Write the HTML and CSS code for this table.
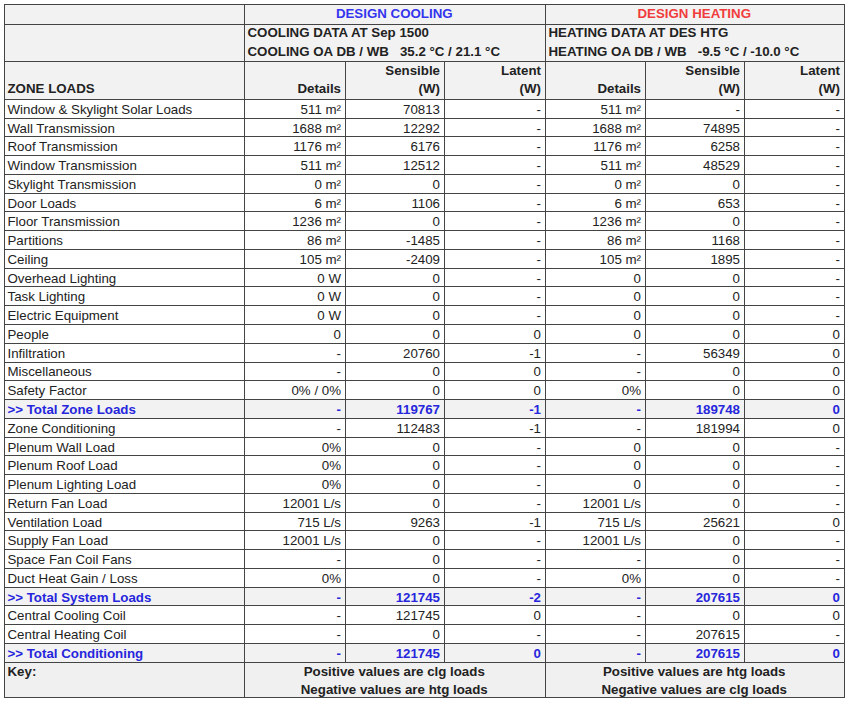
FILE: index.html
```html
<!DOCTYPE html>
<html>
<head>
<meta charset="utf-8">
<title>Zone Loads</title>
<link rel="stylesheet" href="styles.css">
</head>
<body>
<div class="sheet">
  <div class="c hd"></div>
  <div class="c hd span3 ctr title-c">DESIGN COOLING</div>
  <div class="c hd span3 ctr title-h">DESIGN HEATING</div>

  <div class="c hd"></div>
  <div class="c hd span3 info"><span>COOLING DATA AT Sep 1500</span><span>COOLING OA DB / WB   35.2 °C / 21.1 °C</span></div>
  <div class="c hd span3 info"><span>HEATING DATA AT DES HTG</span><span>HEATING OA DB / WB   -9.5 °C / -10.0 °C</span></div>

  <div class="c hd">ZONE LOADS</div>
  <div class="c hd r">Details</div>
  <div class="c hd r"><span>Sensible</span><span>(W)</span></div>
  <div class="c hd r"><span>Latent</span><span>(W)</span></div>
  <div class="c hd r">Details</div>
  <div class="c hd r"><span>Sensible</span><span>(W)</span></div>
  <div class="c hd r"><span>Latent</span><span>(W)</span></div>

  <div class="c">Window &amp; Skylight Solar Loads</div><div class="c r">511 m²</div><div class="c r">70813</div><div class="c r">-</div><div class="c r">511 m²</div><div class="c r">-</div><div class="c r">-</div>
  <div class="c">Wall Transmission</div><div class="c r">1688 m²</div><div class="c r">12292</div><div class="c r">-</div><div class="c r">1688 m²</div><div class="c r">74895</div><div class="c r">-</div>
  <div class="c">Roof Transmission</div><div class="c r">1176 m²</div><div class="c r">6176</div><div class="c r">-</div><div class="c r">1176 m²</div><div class="c r">6258</div><div class="c r">-</div>
  <div class="c">Window Transmission</div><div class="c r">511 m²</div><div class="c r">12512</div><div class="c r">-</div><div class="c r">511 m²</div><div class="c r">48529</div><div class="c r">-</div>
  <div class="c">Skylight Transmission</div><div class="c r">0 m²</div><div class="c r">0</div><div class="c r">-</div><div class="c r">0 m²</div><div class="c r">0</div><div class="c r">-</div>
  <div class="c">Door Loads</div><div class="c r">6 m²</div><div class="c r">1106</div><div class="c r">-</div><div class="c r">6 m²</div><div class="c r">653</div><div class="c r">-</div>
  <div class="c">Floor Transmission</div><div class="c r">1236 m²</div><div class="c r">0</div><div class="c r">-</div><div class="c r">1236 m²</div><div class="c r">0</div><div class="c r">-</div>
  <div class="c">Partitions</div><div class="c r">86 m²</div><div class="c r">-1485</div><div class="c r">-</div><div class="c r">86 m²</div><div class="c r">1168</div><div class="c r">-</div>
  <div class="c">Ceiling</div><div class="c r">105 m²</div><div class="c r">-2409</div><div class="c r">-</div><div class="c r">105 m²</div><div class="c r">1895</div><div class="c r">-</div>
  <div class="c">Overhead Lighting</div><div class="c r">0 W</div><div class="c r">0</div><div class="c r">-</div><div class="c r">0</div><div class="c r">0</div><div class="c r">-</div>
  <div class="c">Task Lighting</div><div class="c r">0 W</div><div class="c r">0</div><div class="c r">-</div><div class="c r">0</div><div class="c r">0</div><div class="c r">-</div>
  <div class="c">Electric Equipment</div><div class="c r">0 W</div><div class="c r">0</div><div class="c r">-</div><div class="c r">0</div><div class="c r">0</div><div class="c r">-</div>
  <div class="c">People</div><div class="c r">0</div><div class="c r">0</div><div class="c r">0</div><div class="c r">0</div><div class="c r">0</div><div class="c r">0</div>
  <div class="c">Infiltration</div><div class="c r">-</div><div class="c r">20760</div><div class="c r">-1</div><div class="c r">-</div><div class="c r">56349</div><div class="c r">0</div>
  <div class="c">Miscellaneous</div><div class="c r">-</div><div class="c r">0</div><div class="c r">0</div><div class="c r">-</div><div class="c r">0</div><div class="c r">0</div>
  <div class="c">Safety Factor</div><div class="c r">0% / 0%</div><div class="c r">0</div><div class="c r">0</div><div class="c r">0%</div><div class="c r">0</div><div class="c r">0</div>
  <div class="c tot">&gt;&gt; Total Zone Loads</div><div class="c r tot">-</div><div class="c r tot">119767</div><div class="c r tot">-1</div><div class="c r tot">-</div><div class="c r tot">189748</div><div class="c r tot">0</div>
  <div class="c">Zone Conditioning</div><div class="c r">-</div><div class="c r">112483</div><div class="c r">-1</div><div class="c r">-</div><div class="c r">181994</div><div class="c r">0</div>
  <div class="c">Plenum Wall Load</div><div class="c r">0%</div><div class="c r">0</div><div class="c r">-</div><div class="c r">0</div><div class="c r">0</div><div class="c r">-</div>
  <div class="c">Plenum Roof Load</div><div class="c r">0%</div><div class="c r">0</div><div class="c r">-</div><div class="c r">0</div><div class="c r">0</div><div class="c r">-</div>
  <div class="c">Plenum Lighting Load</div><div class="c r">0%</div><div class="c r">0</div><div class="c r">-</div><div class="c r">0</div><div class="c r">0</div><div class="c r">-</div>
  <div class="c">Return Fan Load</div><div class="c r">12001 L/s</div><div class="c r">0</div><div class="c r">-</div><div class="c r">12001 L/s</div><div class="c r">0</div><div class="c r">-</div>
  <div class="c">Ventilation Load</div><div class="c r">715 L/s</div><div class="c r">9263</div><div class="c r">-1</div><div class="c r">715 L/s</div><div class="c r">25621</div><div class="c r">0</div>
  <div class="c">Supply Fan Load</div><div class="c r">12001 L/s</div><div class="c r">0</div><div class="c r">-</div><div class="c r">12001 L/s</div><div class="c r">0</div><div class="c r">-</div>
  <div class="c">Space Fan Coil Fans</div><div class="c r">-</div><div class="c r">0</div><div class="c r">-</div><div class="c r">-</div><div class="c r">0</div><div class="c r">-</div>
  <div class="c">Duct Heat Gain / Loss</div><div class="c r">0%</div><div class="c r">0</div><div class="c r">-</div><div class="c r">0%</div><div class="c r">0</div><div class="c r">-</div>
  <div class="c tot">&gt;&gt; Total System Loads</div><div class="c r tot">-</div><div class="c r tot">121745</div><div class="c r tot">-2</div><div class="c r tot">-</div><div class="c r tot">207615</div><div class="c r tot">0</div>
  <div class="c">Central Cooling Coil</div><div class="c r">-</div><div class="c r">121745</div><div class="c r">0</div><div class="c r">-</div><div class="c r">0</div><div class="c r">0</div>
  <div class="c">Central Heating Coil</div><div class="c r">-</div><div class="c r">0</div><div class="c r">-</div><div class="c r">-</div><div class="c r">207615</div><div class="c r">-</div>
  <div class="c tot">&gt;&gt; Total Conditioning</div><div class="c r tot">-</div><div class="c r tot">121745</div><div class="c r tot">0</div><div class="c r tot">-</div><div class="c r tot">207615</div><div class="c r tot">0</div>

  <div class="c key">Key:</div>
  <div class="c key span3 ctr"><span>Positive values are clg loads</span><span>Negative values are htg loads</span></div>
  <div class="c key span3 ctr"><span>Positive values are htg loads</span><span>Negative values are clg loads</span></div>
</div>
</body>
</html>
```

FILE: styles.css
```css
body {
  margin: 0;
  background: #ffffff;
  font-family: "Liberation Sans", Arial, sans-serif;
  font-size: 13.3px;
  color: #222222;
}

.sheet {
  display: grid;
  grid-template-columns: 239px 100px 98px 100px 99px 98px 99px;
  grid-template-rows: 18.5px 36.7px 36.6px repeat(30, 17.78px) 34.6px;
  gap: 1px;
  background: #444444;
  border: 1px solid #444444;
  width: max-content;
  margin: 4px 0 0 4px;
}

.c {
  background: #ffffff;
  display: flex;
  flex-direction: column;
  justify-content: flex-end;
  align-items: flex-start;
  padding: 0 4px 0.8px 2.5px;
  line-height: 15px;
  overflow: hidden;
  white-space: nowrap;
}

.r {
  align-items: flex-end;
  text-align: right;
}

.ctr {
  align-items: center;
  text-align: center;
}

.span3 {
  grid-column: span 3;
}

.hd {
  background: #f2f2f2;
  font-weight: bold;
  line-height: 18.3px;
  padding-bottom: 0;
}

.info {
  line-height: 19px;
  white-space: pre;
}

.title-c {
  color: #3434ee;
}

.title-h {
  color: #f03c3c;
}

.tot {
  background: #f2f2f2;
  color: #2626dc;
  font-weight: bold;
}

.key {
  background: #f0f0f0;
  font-weight: bold;
  justify-content: flex-start;
  line-height: 18.3px;
  padding-bottom: 0;
}
```
